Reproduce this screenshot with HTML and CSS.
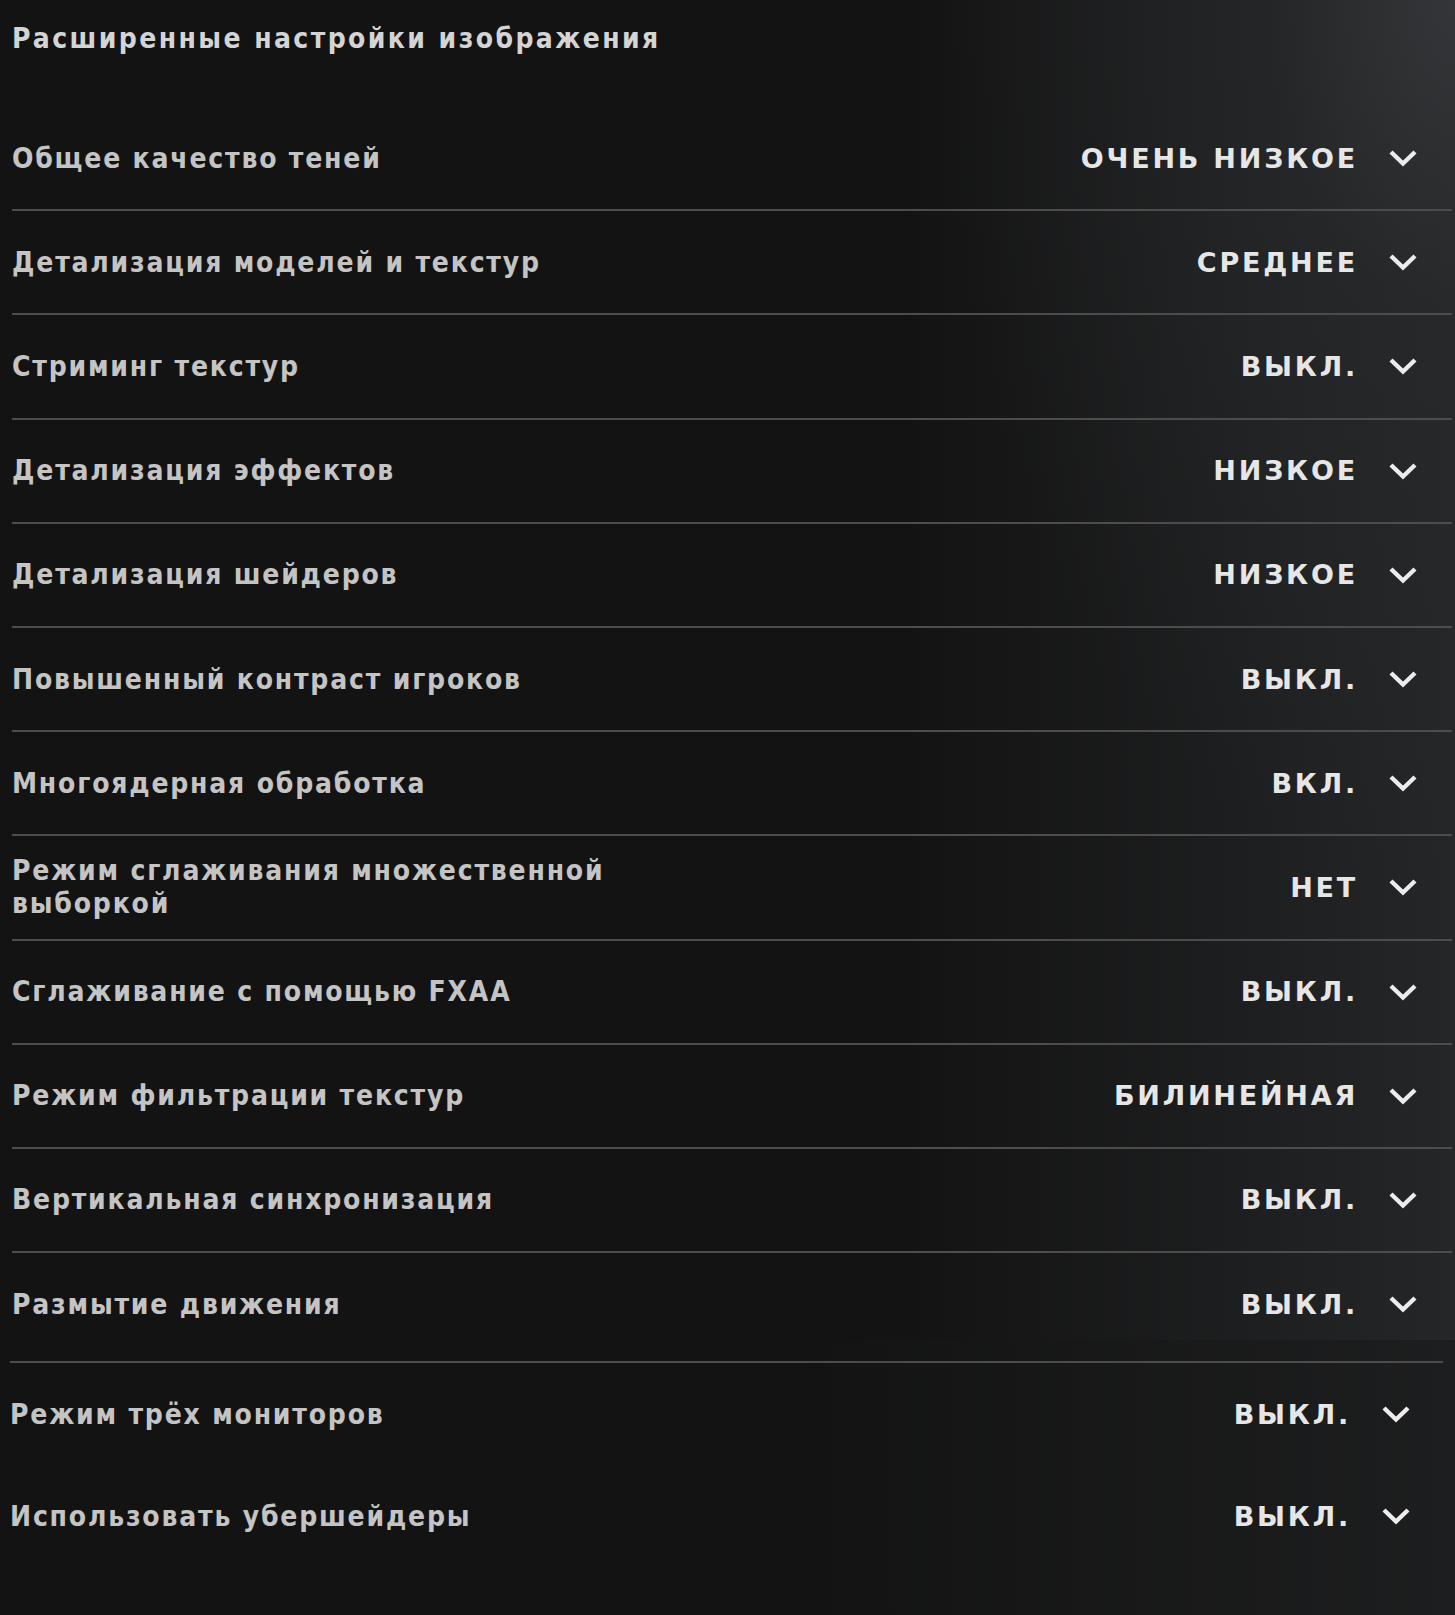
FILE: index.html
```html
<!DOCTYPE html>
<html lang="ru">
<head>
<meta charset="utf-8">
<title>Расширенные настройки изображения</title>
<link rel="stylesheet" href="styles.css">
</head>
<body>
<div class="screen">
  <section class="panel">
    <h1 class="title">Расширенные настройки изображения</h1>
    <div class="rows">
      <div class="row"><span class="label">Общее качество теней</span><span class="value">ОЧЕНЬ НИЗКОЕ</span><svg class="chev" viewBox="0 0 28 18"><polyline points="2,3 14,14.5 26,3"/></svg></div>
      <div class="row"><span class="label">Детализация моделей и текстур</span><span class="value">СРЕДНЕЕ</span><svg class="chev" viewBox="0 0 28 18"><polyline points="2,3 14,14.5 26,3"/></svg></div>
      <div class="row"><span class="label">Стриминг текстур</span><span class="value">ВЫКЛ.</span><svg class="chev" viewBox="0 0 28 18"><polyline points="2,3 14,14.5 26,3"/></svg></div>
      <div class="row"><span class="label">Детализация эффектов</span><span class="value">НИЗКОЕ</span><svg class="chev" viewBox="0 0 28 18"><polyline points="2,3 14,14.5 26,3"/></svg></div>
      <div class="row"><span class="label">Детализация шейдеров</span><span class="value">НИЗКОЕ</span><svg class="chev" viewBox="0 0 28 18"><polyline points="2,3 14,14.5 26,3"/></svg></div>
      <div class="row"><span class="label">Повышенный контраст игроков</span><span class="value">ВЫКЛ.</span><svg class="chev" viewBox="0 0 28 18"><polyline points="2,3 14,14.5 26,3"/></svg></div>
      <div class="row"><span class="label">Многоядерная обработка</span><span class="value">ВКЛ.</span><svg class="chev" viewBox="0 0 28 18"><polyline points="2,3 14,14.5 26,3"/></svg></div>
      <div class="row"><span class="label label-wrap">Режим сглаживания множественной выборкой</span><span class="value">НЕТ</span><svg class="chev" viewBox="0 0 28 18"><polyline points="2,3 14,14.5 26,3"/></svg></div>
      <div class="row"><span class="label">Сглаживание с помощью FXAA</span><span class="value">ВЫКЛ.</span><svg class="chev" viewBox="0 0 28 18"><polyline points="2,3 14,14.5 26,3"/></svg></div>
      <div class="row"><span class="label">Режим фильтрации текстур</span><span class="value">БИЛИНЕЙНАЯ</span><svg class="chev" viewBox="0 0 28 18"><polyline points="2,3 14,14.5 26,3"/></svg></div>
      <div class="row"><span class="label">Вертикальная синхронизация</span><span class="value">ВЫКЛ.</span><svg class="chev" viewBox="0 0 28 18"><polyline points="2,3 14,14.5 26,3"/></svg></div>
      <div class="row row-last"><span class="label">Размытие движения</span><span class="value">ВЫКЛ.</span><svg class="chev" viewBox="0 0 28 18"><polyline points="2,3 14,14.5 26,3"/></svg></div>
    </div>
  </section>
  <div class="sep"></div>
  <section class="extra">
    <div class="row row-extra"><span class="label">Режим трёх мониторов</span><span class="value">ВЫКЛ.</span><svg class="chev" viewBox="0 0 28 18"><polyline points="2,3 14,14.5 26,3"/></svg></div>
    <div class="row row-extra"><span class="label">Использовать убершейдеры</span><span class="value">ВЫКЛ.</span><svg class="chev" viewBox="0 0 28 18"><polyline points="2,3 14,14.5 26,3"/></svg></div>
  </section>
</div>
</body>
</html>
```

FILE: styles.css
```css
html, body {
  margin: 0;
  padding: 0;
}
body {
  width: 1455px;
  height: 1615px;
  overflow: hidden;
  background: #131313;
  font-family: "DejaVu Sans", "Liberation Sans", sans-serif;
}
.screen {
  min-height: 1615px;
  background:
    linear-gradient(to right, rgba(19,19,19,0) 55%, rgba(30,31,32,0.9) 100%);
}
.panel {
  padding: 0 3px 0 12px;
  background:
    radial-gradient(ellipse 520px 900px at 100% 0%, rgba(52,54,57,0.95) 0%, rgba(40,42,44,0.6) 35%, rgba(19,19,19,0) 100%),
    linear-gradient(to right, #131313 0%, #131313 62%, #1d1e1f 85%, #252628 100%);
  background-size: 100% 1340px;
  background-repeat: no-repeat;
}
.title {
  margin: 0;
  height: 107px;
  box-sizing: border-box;
  padding-top: 24px;
  line-height: 30px;
  font-family: "DejaVu Sans Condensed", "DejaVu Sans", sans-serif;
  font-stretch: condensed;
  font-weight: bold;
  font-size: 28px;
  letter-spacing: 2.4px;
  color: #d4d4d4;
  white-space: nowrap;
}
.row {
  display: flex;
  align-items: center;
  height: 104.2px;
  box-sizing: border-box;
  border-bottom: 2px solid #4c4c4c;
}
.row-last {
  height: 102px;
  border-bottom: none;
}
.label {
  font-family: "DejaVu Sans Condensed", "DejaVu Sans", sans-serif;
  font-stretch: condensed;
  font-weight: bold;
  font-size: 28px;
  letter-spacing: 1.8px;
  color: #c4c4c4;
  line-height: 33px;
}
.label-wrap {
  max-width: 640px;
}
.value {
  margin-left: auto;
  font-family: "DejaVu Sans", sans-serif;
  font-weight: bold;
  font-size: 27px;
  letter-spacing: 2.8px;
  color: #e6e6e6;
  white-space: nowrap;
  margin-right: 31px;
}
.chev {
  width: 28px;
  height: 18px;
  margin-right: 35px;
  flex: none;
}
.chev polyline {
  fill: none;
  stroke: #ececec;
  stroke-width: 4.4;
}
.sep {
  margin: 6px 12px 0 10px;
  height: 2px;
  background: #4c4c4c;
}
.extra {
  padding: 0 0 0 10px;
}
.row-extra {
  height: 102px;
  border-bottom: none;
}
.row-extra .chev {
  margin-right: 45px;
}
```
